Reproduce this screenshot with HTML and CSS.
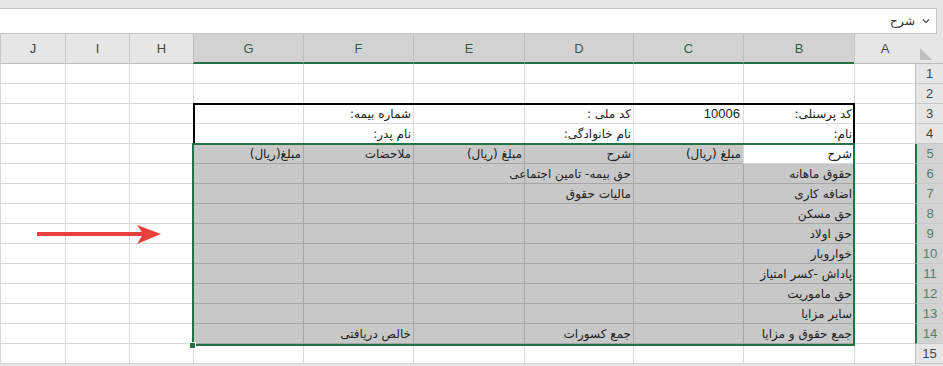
FILE: index.html
```html
<!DOCTYPE html>
<html lang="fa">
<head>
    <meta charset="UTF-8">
    <title>فیش حقوقی</title>
    <link rel="stylesheet" href="styles.css">
</head>
<body>
<div class="app">
    <div class="topbar"></div>
    <div class="formula">
        <svg class="chev" width="8" height="6" viewBox="0 0 8 6"><path d="M1 1.5 L4 4.5 L7 1.5" fill="none" stroke="#444" stroke-width="1.2"/></svg>
        <span class="fx">شرح</span>
    </div>

    <div class="sheet">
        <!-- column headers -->
        <div class="corner"><i></i></div>
        <div class="h">A</div>
        <div class="h hs">B</div>
        <div class="h hs">C</div>
        <div class="h hs">D</div>
        <div class="h hs">E</div>
        <div class="h hs">F</div>
        <div class="h hs">G</div>
        <div class="h">H</div>
        <div class="h">I</div>
        <div class="h">J</div>

        <!-- 1 -->
        <div class="rh">1</div>
        <div class="c"></div><div class="c"></div><div class="c"></div><div class="c"></div><div class="c"></div>
        <div class="c"></div><div class="c"></div><div class="c"></div><div class="c"></div><div class="c"></div>
        <!-- 2 -->
        <div class="rh">2</div>
        <div class="c"></div><div class="c"></div><div class="c"></div><div class="c"></div><div class="c"></div>
        <div class="c"></div><div class="c"></div><div class="c"></div><div class="c"></div><div class="c"></div>
        <!-- 3 -->
        <div class="rh">3</div>
        <div class="c"></div>
        <div class="c"><span>کد پرسنلی:</span></div>
        <div class="c num"><span>10006</span></div>
        <div class="c"><span>کد ملی :</span></div>
        <div class="c"></div>
        <div class="c"><span>شماره بیمه:</span></div>
        <div class="c"></div><div class="c"></div><div class="c"></div><div class="c"></div>
        <!-- 4 -->
        <div class="rh">4</div>
        <div class="c"></div>
        <div class="c"><span>نام:</span></div>
        <div class="c"></div>
        <div class="c"><span>نام خانوادگی:</span></div>
        <div class="c"></div>
        <div class="c"><span>نام پدر:</span></div>
        <div class="c"></div><div class="c"></div><div class="c"></div><div class="c"></div>
        <!-- 5 -->
        <div class="rh rs">5</div>
        <div class="c"></div>
        <div class="c w"><span>شرح</span></div>
        <div class="c g"><span>مبلغ (ریال)</span></div>
        <div class="c g"><span>شرح</span></div>
        <div class="c g"><span>مبلغ (ریال)</span></div>
        <div class="c g"><span>ملاحضات</span></div>
        <div class="c g"><span>مبلغ(ریال)</span></div>
        <div class="c"></div><div class="c"></div><div class="c"></div>
        <!-- 6 -->
        <div class="rh rs">6</div>
        <div class="c"></div>
        <div class="c g"><span>حقوق ماهانه</span></div>
        <div class="c g"></div>
        <div class="c g"><span>حق بیمه- تامین اجتماعی</span></div>
        <div class="c g"></div><div class="c g"></div><div class="c g"></div>
        <div class="c"></div><div class="c"></div><div class="c"></div>
        <!-- 7 -->
        <div class="rh rs">7</div>
        <div class="c"></div>
        <div class="c g"><span>اضافه کاری</span></div>
        <div class="c g"></div>
        <div class="c g"><span>مالیات حقوق</span></div>
        <div class="c g"></div><div class="c g"></div><div class="c g"></div>
        <div class="c"></div><div class="c"></div><div class="c"></div>
        <!-- 8 -->
        <div class="rh rs">8</div>
        <div class="c"></div>
        <div class="c g"><span>حق مسکن</span></div>
        <div class="c g"></div><div class="c g"></div><div class="c g"></div><div class="c g"></div><div class="c g"></div>
        <div class="c"></div><div class="c"></div><div class="c"></div>
        <!-- 9 -->
        <div class="rh rs">9</div>
        <div class="c"></div>
        <div class="c g"><span>حق اولاد</span></div>
        <div class="c g"></div><div class="c g"></div><div class="c g"></div><div class="c g"></div><div class="c g"></div>
        <div class="c"></div><div class="c"></div><div class="c"></div>
        <!-- 10 -->
        <div class="rh rs">10</div>
        <div class="c"></div>
        <div class="c g"><span>خواروبار</span></div>
        <div class="c g"></div><div class="c g"></div><div class="c g"></div><div class="c g"></div><div class="c g"></div>
        <div class="c"></div><div class="c"></div><div class="c"></div>
        <!-- 11 -->
        <div class="rh rs">11</div>
        <div class="c"></div>
        <div class="c g"><span>پاداش -کسر امتیاز</span></div>
        <div class="c g"></div><div class="c g"></div><div class="c g"></div><div class="c g"></div><div class="c g"></div>
        <div class="c"></div><div class="c"></div><div class="c"></div>
        <!-- 12 -->
        <div class="rh rs">12</div>
        <div class="c"></div>
        <div class="c g"><span>حق ماموریت</span></div>
        <div class="c g"></div><div class="c g"></div><div class="c g"></div><div class="c g"></div><div class="c g"></div>
        <div class="c"></div><div class="c"></div><div class="c"></div>
        <!-- 13 -->
        <div class="rh rs">13</div>
        <div class="c"></div>
        <div class="c g"><span>سایر مزایا</span></div>
        <div class="c g"></div><div class="c g"></div><div class="c g"></div><div class="c g"></div><div class="c g"></div>
        <div class="c"></div><div class="c"></div><div class="c"></div>
        <!-- 14 -->
        <div class="rh rs">14</div>
        <div class="c"></div>
        <div class="c g"><span>جمع حقوق و مزایا</span></div>
        <div class="c g"></div>
        <div class="c g"><span>جمع کسورات</span></div>
        <div class="c g"></div>
        <div class="c g"><span>خالص دریافتی</span></div>
        <div class="c g"></div>
        <div class="c"></div><div class="c"></div><div class="c"></div>
        <!-- 15 -->
        <div class="rh">15</div>
        <div class="c"></div><div class="c"></div><div class="c"></div><div class="c"></div><div class="c"></div>
        <div class="c"></div><div class="c"></div><div class="c"></div><div class="c"></div><div class="c"></div>

        <!-- overlays: info box border, selection, arrow shape -->
        <div class="infobox"></div>
        <div class="selection"><i class="handle"></i></div>
        <svg class="arrow" width="126" height="22" viewBox="0 0 126 22">
            <rect x="1" y="8" width="106" height="4" fill="#e8413c"/>
            <path d="M101 1 L125 10 L101 20 L107 10 Z" fill="#e8413c"/>
        </svg>
    </div>
</div>
</body>
</html>
```

FILE: styles.css
```css
* {
    margin: 0;
    padding: 0;
    box-sizing: border-box;
}

body {
    background-color: #e6e6e6;
    font-family: "Liberation Sans", "DejaVu Sans", sans-serif;
    color: #222;
    overflow: hidden;
}

.app {
    width: 943px;
    height: 366px;
}

.topbar {
    height: 8px;
}

.formula {
    width: 937px;
    height: 26px;
    background: #fff;
    border: 1px solid #c6c6c6;
    border-left: none;
    display: flex;
    flex-direction: row-reverse;
    align-items: center;
    padding-right: 6px;
    gap: 7px;
}

.formula .fx {
    font-family: "DejaVu Serif", serif;
    font-size: 12px;
    color: #333;
    direction: rtl;
}

.sheet {
    position: relative;
    direction: rtl;
    display: grid;
    grid-template-columns: 28px 61px 111px 110px 109px 111px 110px 110px 64px 64px 65px;
    grid-template-rows: 30px repeat(15, 20px);
}

/* header row */
.corner {
    background: #e6e6e6;
    border-bottom: 1px solid #bdbdbd;
    display: flex;
    align-items: flex-end;
    justify-content: flex-end;
    padding: 0 0 3px 5px;
}

.corner i {
    width: 0;
    height: 0;
    border-bottom: 12px solid #bdbdbd;
    border-right: 12px solid transparent;
}

.h {
    background: #e6e6e6;
    border-left: 1px solid #c8c8c8;
    border-bottom: 1px solid #bdbdbd;
    font-size: 13px;
    color: #444;
    text-align: center;
    line-height: 30px;
}

.hs {
    background: #d2d2d2;
    border-left-color: #bdbdbd;
    border-bottom: 2px solid #217346;
    color: #3c5a48;
    line-height: 29px;
}

/* row headers */
.rh {
    background: #e6e6e6;
    border-left: 1px solid #bdbdbd;
    border-bottom: 1px solid #c8c8c8;
    font-size: 13px;
    color: #444;
    text-align: center;
    line-height: 20px;
}

.rs {
    background: #d2d2d2;
    border-left: 2px solid #217346;
    color: #5b7a68;
}

/* cells */
.c {
    background: #fff;
    border-left: 1px solid #d9d9d9;
    border-bottom: 1px solid #d9d9d9;
    font-family: "DejaVu Sans", sans-serif;
    font-size: 12px;
    line-height: 20px;
    padding: 0 2px;
    white-space: nowrap;
    overflow: visible;
    text-align: right;
}

.c span {
    position: relative;
    z-index: 1;
}

.num {
    font-family: "Liberation Sans", sans-serif;
    font-size: 13px;
    padding-right: 3px;
}

.g {
    background: #c8c8c8;
    border-left-color: #a6a6a6;
    border-bottom-color: #a6a6a6;
}

.w {
    background: #fff;
}

/* overlays */
.infobox {
    position: absolute;
    left: 193px;
    top: 69px;
    width: 662px;
    height: 42px;
    border: 2px solid #000;
    z-index: 2;
}

.selection {
    position: absolute;
    left: 192px;
    top: 109px;
    width: 663px;
    height: 203px;
    border: 2px solid #217346;
    z-index: 3;
}

.handle {
    position: absolute;
    left: -5px;
    bottom: -5px;
    width: 7px;
    height: 7px;
    background: #217346;
    border: 1px solid #fff;
}

.arrow {
    position: absolute;
    left: 36px;
    top: 190px;
    z-index: 2;
}
```
